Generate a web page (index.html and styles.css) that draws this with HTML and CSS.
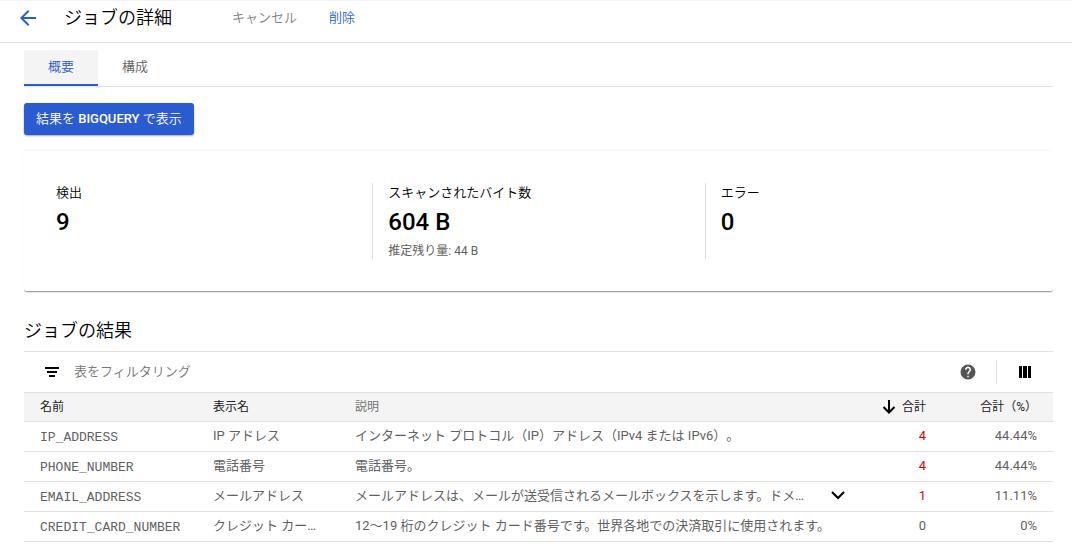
FILE: index.html
```html
<!DOCTYPE html>
<html lang="ja">
<head>
<meta charset="utf-8">
<title>ジョブの詳細</title>
<link rel="stylesheet" href="styles.css">
</head>
<body>
<header class="topbar">
  <button class="icon-button back" aria-label="戻る">
    <svg width="24" height="24" viewBox="0 0 24 24"><path fill="currentColor" d="M20 11H7.800l5.600-5.600L12 4l-8 8 8 8 1.400-1.400L7.800 13H20z"/></svg>
  </button>
  <h1 class="title">ジョブの詳細</h1>
  <button class="text-button" disabled>キャンセル</button>
  <button class="text-button active">削除</button>
</header>
<main class="content">
  <nav class="tabs" role="tablist">
    <button class="tab selected" role="tab" aria-selected="true">概要</button>
    <button class="tab" role="tab" aria-selected="false">構成</button>
  </nav>
  <button class="primary">結果を <span class="strong">BIGQUERY</span> で表示</button>
  <section class="card">
    <div class="stat">
      <div class="stat-label">検出</div>
      <div class="stat-value">9</div>
    </div>
    <div class="stat">
      <div class="stat-label">スキャンされたバイト数</div>
      <div class="stat-value">604 B</div>
      <div class="stat-note">推定残り量: 44 B</div>
    </div>
    <div class="stat">
      <div class="stat-label">エラー</div>
      <div class="stat-value">0</div>
    </div>
  </section>
  <h2 class="heading">ジョブの結果</h2>
  <div class="filter">
    <svg class="filter-icon" width="20" height="20" viewBox="0 0 20 20"><path fill="currentColor" d="M3 5h14v2H3zM5 9h10v2H5zM7 13h6v2H7z"/></svg>
    <input class="filter-input" type="text" aria-label="表をフィルタリング" placeholder="表をフィルタリング">
    <button class="icon-button help" aria-label="ヘルプ">
      <svg width="18" height="18" viewBox="0 0 24 24"><path fill="currentColor" d="M12 2a10 10 0 1 0 0 20 10 10 0 0 0 0-20zm1 17h-2v-2h2zm2.070-7.750-.9.920C13.450 12.900 13 13.500 13 15h-2v-.5c0-1.100.45-2.100 1.170-2.830l1.240-1.260A2 2 0 1 0 10 9H8a4 4 0 1 1 7.070 2.250z"/></svg>
    </button>
    <button class="icon-button columns" aria-label="列の表示オプション">
      <svg width="20" height="20" viewBox="0 0 20 20"><path fill="currentColor" d="M4 4h3v12H4zM8 4h4v12H8zM13 4h3v12h-3z"/></svg>
    </button>
  </div>
  <table class="results">
    <colgroup><col class="c-name"><col class="c-label"><col><col class="c-total"><col class="c-percent"></colgroup>
    <thead>
      <tr>
        <th scope="col">名前</th>
        <th scope="col">表示名</th>
        <th scope="col" class="muted">説明</th>
        <th scope="col" class="num"><span class="sort"><svg width="16" height="16" viewBox="0 0 16 16"><path fill="none" stroke="currentColor" stroke-width="2" d="M8 1v12M2.500 8 8 13.500 13.500 8"/></svg>合計</span></th>
        <th scope="col" class="num">合計（%）</th>
      </tr>
    </thead>
    <tbody>
      <tr><td class="mono">IP_ADDRESS</td><td>IP アドレス</td><td>インターネット プロトコル（IP）アドレス（IPv4 または IPv6）。</td><td class="num hit">4</td><td class="num">44.44%</td></tr>
      <tr><td class="mono">PHONE_NUMBER</td><td>電話番号</td><td>電話番号。</td><td class="num hit">4</td><td class="num">44.44%</td></tr>
      <tr><td class="mono">EMAIL_ADDRESS</td><td>メールアドレス</td><td><div class="expandable"><span>メールアドレスは、メールが送受信されるメールボックスを示します。ドメ…</span><button class="icon-button expand" aria-label="展開"><svg width="16" height="16" viewBox="0 0 16 16"><path fill="none" stroke="currentColor" stroke-width="2" d="m2 4 6 6 6-6"/></svg></button></div></td><td class="num hit">1</td><td class="num">11.11%</td></tr>
      <tr><td class="mono">CREDIT_CARD_NUMBER</td><td>クレジット カー…</td><td>12～19 桁のクレジット カード番号です。世界各地での決済取引に使用されます。</td><td class="num">0</td><td class="num">0%</td></tr>
    </tbody>
  </table>
</main>
</body>
</html>
```
FILE: styles.css
```css
* {
  box-sizing: border-box;
}

body {
  margin: 0;
  background: #fff;
  color: #000;
  font-family: Roboto, "Noto Sans CJK JP", sans-serif;
  font-size: 13px;
  line-height: 20px;
  text-spacing-trim: space-all;
}

button,
input {
  margin: 0;
  padding: 0;
  border: 0;
  background: none;
  color: inherit;
  font: inherit;
}

svg {
  display: block;
}

.topbar {
  display: flex;
  align-items: center;
  height: 43px;
  padding: 0 16px 8px;
  border-top: 1px solid #f4f4f4;
  border-bottom: 1px solid #e0e0e0;
}

.icon-button {
  display: flex;
  align-items: center;
  justify-content: center;
}

.back {
  width: 24px;
  color: #2a5bd0;
}

.title {
  margin: 0 60px 0 24px;
  font-size: 18px;
  font-weight: 350;
  line-height: 24px;
}

.text-button {
  margin-right: 32px;
  color: #808080;
  font-weight: 350;
}

.text-button.active {
  color: #2a5bd0;
}

.content {
  padding: 7px 19px 7px 24px;
}

.tabs {
  display: flex;
  border-bottom: 1px solid #e0e0e0;
}

.tab {
  height: 36px;
  padding: 0 24px;
  border-bottom: 2px solid transparent;
  color: #616161;
  font-weight: 350;
}

.tab.selected {
  border-bottom-color: #2a5bd0;
  background: #f4f4f4;
  color: #2a5bd0;
}

.primary {
  display: block;
  height: 32px;
  margin: 16px 0 15px;
  padding: 0 12px;
  border-radius: 3px;
  background: #2a5bd0;
  box-shadow: 0 1px 2px rgba(0, 0, 0, .35);
  color: #fff;
  font-weight: 350;
}

.strong {
  font-weight: 500;
}

.card {
  display: grid;
  grid-template-columns: repeat(3, 1fr);
  padding: 32px 16px;
  border-top: 1px solid #f8f8f8;
  border-bottom: 1px solid #a0a0a0;
  border-radius: 3px;
  box-shadow: 0 1px 1px rgba(0, 0, 0, .1);
}

.stat {
  min-height: 76px;
  padding-left: 16px;
}

.stat + .stat {
  padding-left: 15px;
  border-left: 1px solid #e0e0e0;
}

.stat-label {
  font-weight: 350;
  line-height: 19px;
}

.stat-value {
  font-size: 24px;
  font-weight: 500;
  line-height: 41px;
}

.stat-note {
  color: #616161;
  font-size: 12px;
  line-height: 16px;
}

.heading {
  margin: 27px 0 8px;
  font-size: 18px;
  font-weight: 350;
  line-height: 24px;
}

.filter {
  display: flex;
  align-items: center;
  height: 41px;
  padding-left: 18px;
  border-top: 1px solid #e0e0e0;
}

.filter-icon {
  flex: none;
}

.filter-input {
  flex: 1;
  min-width: 0;
  margin-left: 12px;
}

.filter-input::placeholder {
  color: #757575;
  font-weight: 350;
  opacity: 1;
}

.help {
  width: 56px;
  height: 24px;
  color: #555;
}

.columns {
  width: 57px;
  height: 24px;
  border-left: 1px solid #e0e0e0;
}

.results {
  width: 100%;
  border-collapse: separate;
  border-spacing: 0;
  table-layout: fixed;
  color: #616161;
}

.c-name {
  width: 173px;
}

.c-label {
  width: 142px;
}

.c-total {
  width: 80px;
}

.c-percent {
  width: 111px;
}

.results th,
.results td {
  height: 30px;
  padding: 0 0 0 16px;
  border-bottom: 1px solid #e0e0e0;
  text-align: left;
  white-space: nowrap;
}

.results td {
  padding-bottom: 2px;
}

.results th {
  border-top: 1px solid #e0e0e0;
  background: #f4f4f4;
  color: #212121;
  font-size: 12px;
  font-weight: 400;
}

.results th.muted {
  color: #757575;
}

.results .num {
  padding-right: 16px;
  padding-left: 0;
  text-align: right;
}

.results .mono {
  padding-top: 2px;
  padding-bottom: 0;
  font-family: "Liberation Mono", monospace;
}

.results .hit {
  color: #d50000;
}

.sort {
  display: flex;
  align-items: center;
  justify-content: flex-end;
  gap: 5px;
}

.sort svg,
.expand {
  color: #000;
}

.expandable {
  display: flex;
  align-items: center;
  justify-content: space-between;
  padding-right: 16px;
}
```
